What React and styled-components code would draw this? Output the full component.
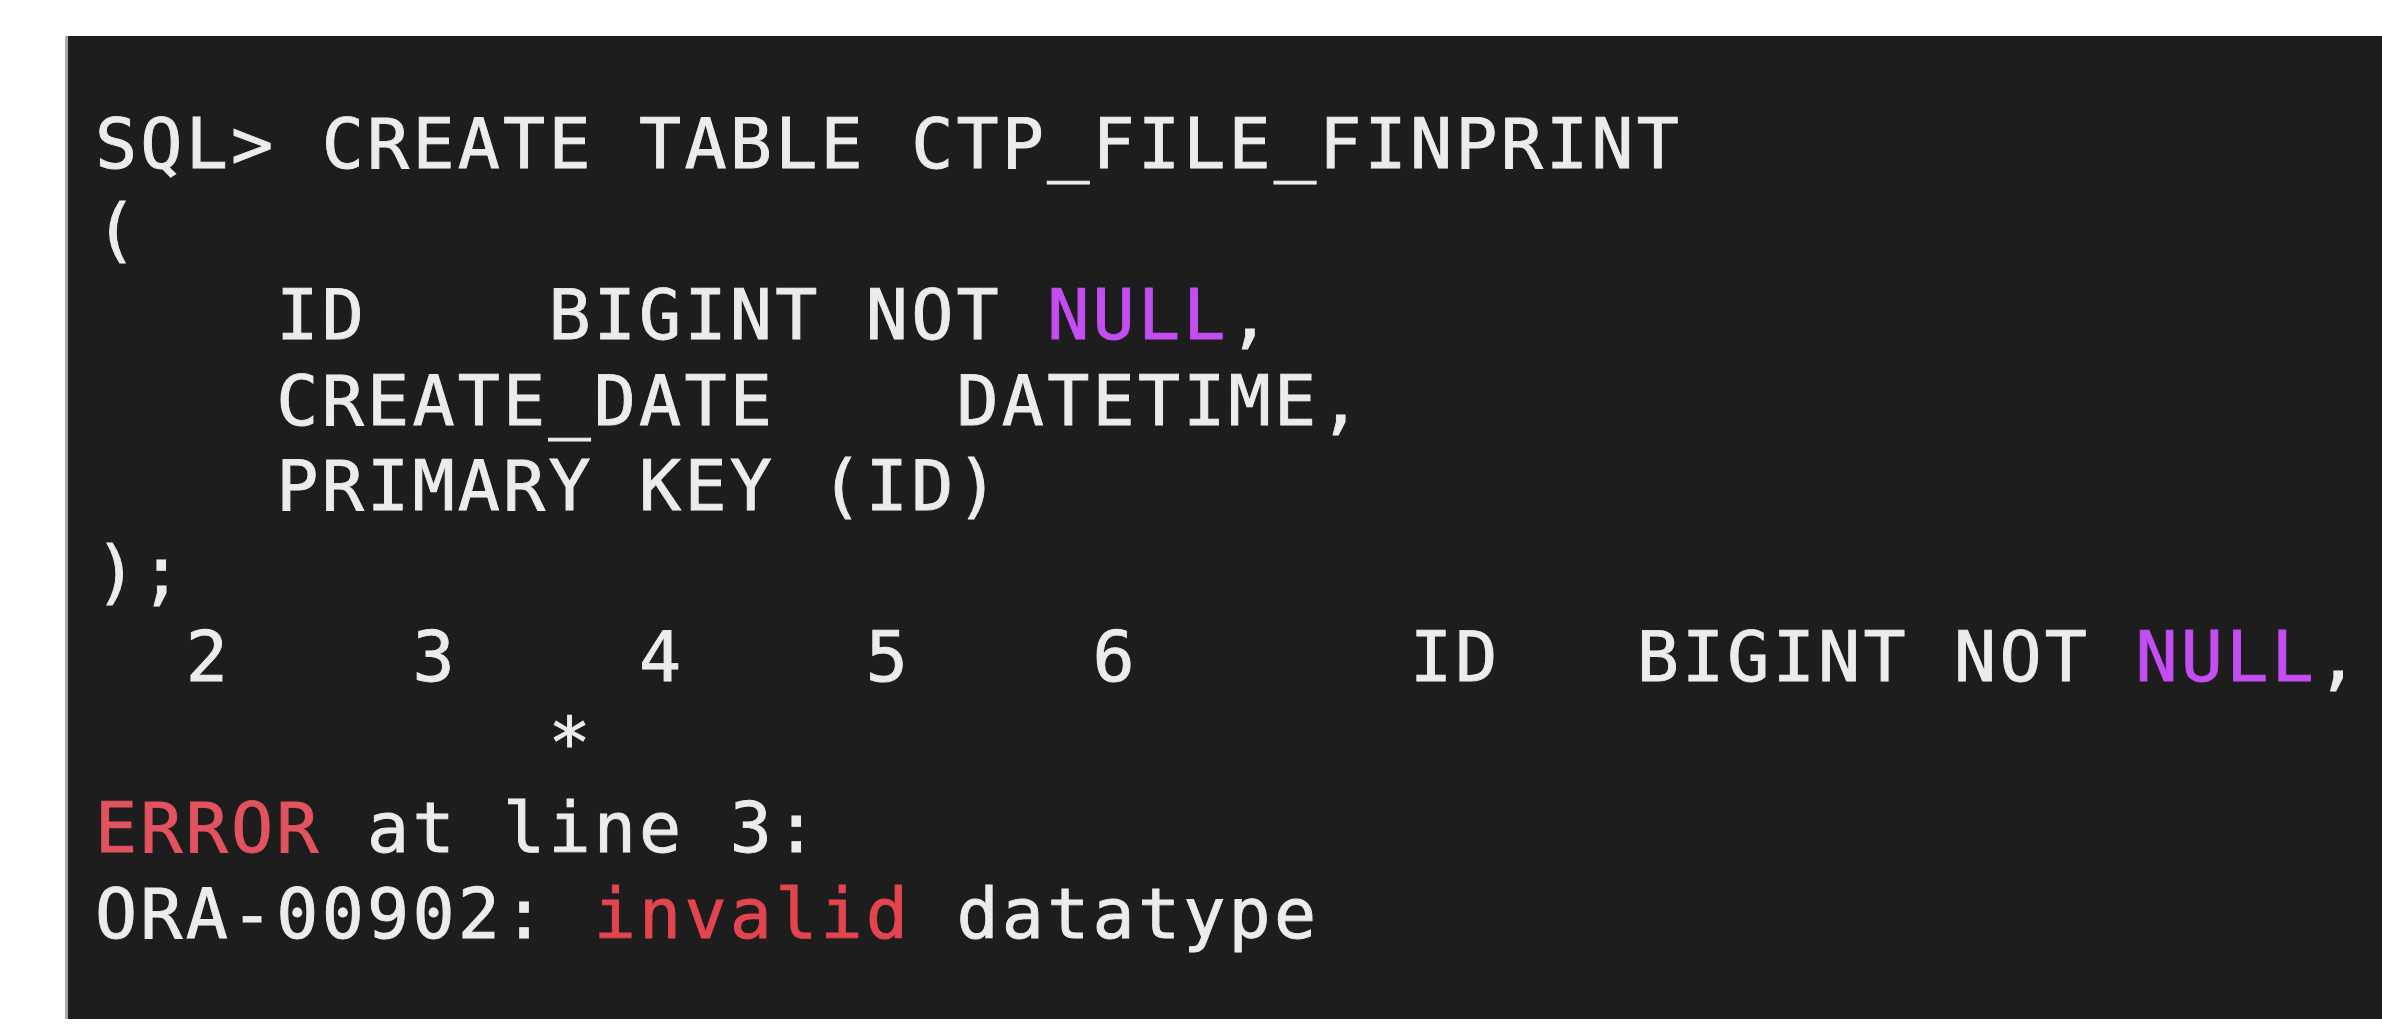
import React from "react";
import styled, { createGlobalStyle } from "styled-components";

const GlobalStyle = createGlobalStyle`
  html, body {
    margin: 0;
    padding: 0;
    background: #ffffff;
  }
  body {
    overflow: hidden;
  }
`;

const Page = styled.div`
  width: 2382px;
  height: 1034px;
  background: #ffffff;
  padding: 36px 0 15px 65px;
  box-sizing: border-box;
  display: flex;
`;

const Terminal = styled.div`
  flex: 1;
  background: #1d1d1d;
  border-left: 3px solid #a8a8a8;
  padding: 66px 0 0 27px;
  box-sizing: border-box;
  overflow: hidden;
`;

const Output = styled.pre`
  margin: 0;
  font-family: "DejaVu Sans Mono", "Liberation Mono", monospace;
  font-size: 70px;
  line-height: 85.5px;
  letter-spacing: 3.2px;
  color: #ececec;
  white-space: pre;
  -webkit-text-stroke: 0.9px currentColor;
`;

const Line = styled.div`
  height: 85.5px;
`;

const colors = {
  keyword: "#c44ef2",
  error: "#e2535f",
  warn: "#e3454f",
};

const Token = styled.span`
  color: ${props => colors[props.kind] || "inherit"};
`;

const lines = [
  [["SQL> CREATE TABLE CTP_FILE_FINPRINT"]],
  [["("]],
  [["    ID    BIGINT NOT "], ["NULL", "keyword"], [","]],
  [["    CREATE_DATE    DATETIME,"]],
  [["    PRIMARY KEY (ID)"]],
  [[");"]],
  [["  2    3    4    5    6      ID   BIGINT NOT "], ["NULL", "keyword"], [","]],
  [["          *"]],
  [["ERROR", "error"], [" at line 3:"]],
  [["ORA-00902: "], ["invalid", "warn"], [" datatype"]],
];

export default function App() {
  return (
    <>
      <GlobalStyle />
      <Page>
        <Terminal>
          <Output>
            {lines.map((parts, i) => (
              <Line key={i}>
                {parts.map(([text, kind], j) => (
                  <Token key={j} kind={kind}>
                    {text}
                  </Token>
                ))}
              </Line>
            ))}
          </Output>
        </Terminal>
      </Page>
    </>
  );
}
